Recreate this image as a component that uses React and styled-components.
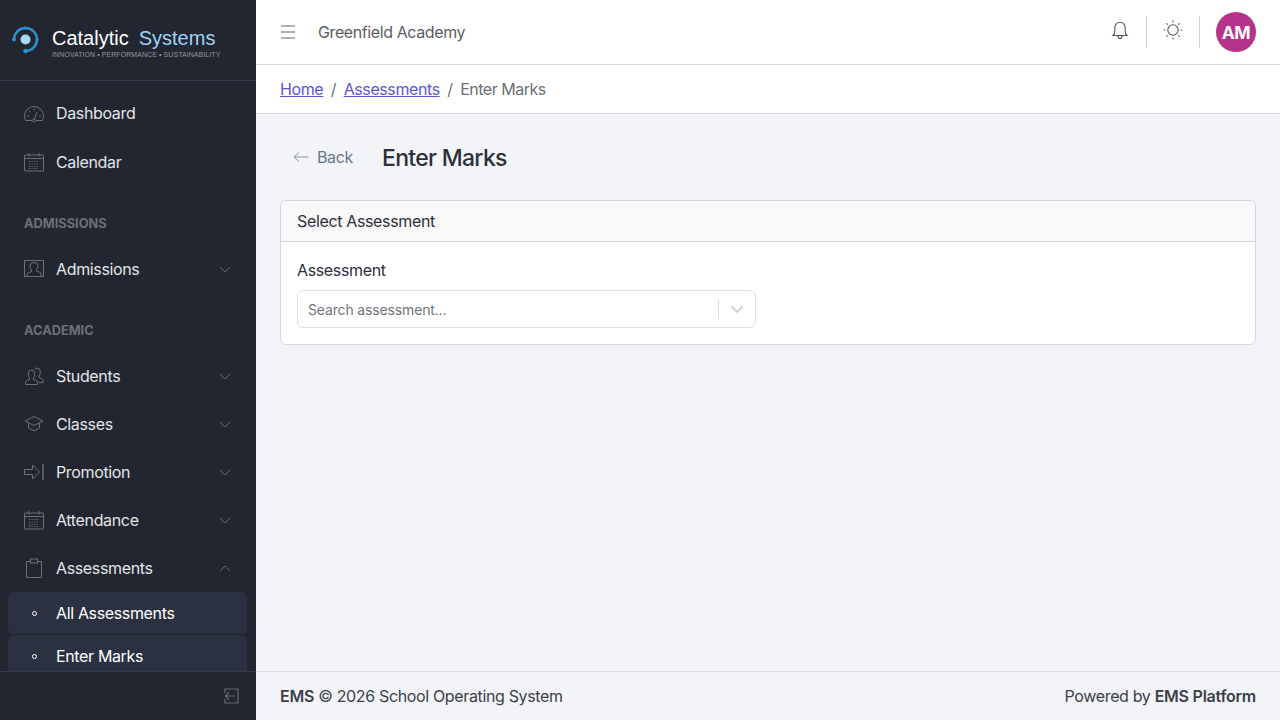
import styled, { createGlobalStyle } from "styled-components";

const Global = createGlobalStyle`
  * { box-sizing: border-box; }
  html, body { margin: 0; height: 100%; }
  body {
    font-family: Inter, "Noto Sans", sans-serif;
    font-size: 16px;
    letter-spacing: -0.022em;
    color: #252b36;
    background: #f3f4f7;
  }
`;

const Layout = styled.div`
  display: flex;
  width: 100%;
  height: 100vh;
  overflow: hidden;
`;

const Sidebar = styled.aside`
  display: flex;
  flex-direction: column;
  flex: 0 0 256px;
  height: 100%;
  background: #212631;
`;

const Brand = styled.div`
  display: flex;
  align-items: center;
  flex: 0 0 81px;
  gap: 10px;
  padding: 0 0 2px 11px;
  border-bottom: 1px solid #323a49;
`;

const BrandText = styled.div`
  display: flex;
  flex-direction: column;
  margin-top: 7px;
`;

const BrandName = styled.div`
  font-family: "Liberation Sans", Arial, sans-serif;
  font-size: 20px;
  line-height: 22px;
  letter-spacing: 0;
  color: #fff;
  white-space: nowrap;
  span {
    color: #9fd3f5;
    margin-left: 10px;
  }
`;

const Tagline = styled.div`
  margin-top: 1px;
  font-family: "Liberation Sans", Arial, sans-serif;
  font-size: 7px;
  line-height: 9px;
  letter-spacing: 0.07px;
  color: #93979d;
  white-space: nowrap;
`;

const Nav = styled.nav`
  flex: 1;
  min-height: 0;
  overflow: hidden;
  padding: 8px 0 0;
  & > :first-child {
    margin-bottom: 1px;
  }
`;

const NavItem = styled.div`
  display: flex;
  align-items: center;
  height: ${(p) => (p.$sub ? "42px" : "48px")};
  margin: ${(p) => (p.$sub ? "0 9px 1px 8px" : "0")};
  padding: ${(p) => (p.$sub ? "0 0 0 16px" : "0 25px 0 24px")};
  border-radius: 6px;
  background: ${(p) => (p.$sub ? "#2b3140" : "transparent")};
  color: ${(p) => (p.$sub ? "#fff" : "#e4e5e7")};
`;

const NavIcon = styled.svg`
  flex: 0 0 20px;
  width: 20px;
  height: 20px;
  margin-right: 12px;
  fill: none;
  stroke: #6b7079;
  stroke-width: 1;
`;

const Bullet = styled.span`
  flex: 0 0 5px;
  width: 5px;
  height: 5px;
  margin: 0 19px 0 8px;
  border: 1px solid #fff;
  border-radius: 50%;
`;

const NavLabel = styled.span`
  flex: 1;
  white-space: nowrap;
`;

const Chevron = styled.svg`
  width: 12px;
  height: 7px;
  fill: none;
  stroke: #666a72;
  stroke-width: 1;
  transform: ${(p) => (p.$up ? "rotate(180deg)" : "none")};
`;

const SectionTitle = styled.div`
  height: 59px;
  padding: 28px 24px 0;
  font-size: 12.8px;
  line-height: 19px;
  font-weight: 700;
  letter-spacing: 0;
  color: #6c7077;
  text-transform: uppercase;
`;

const SidebarFoot = styled.div`
  display: flex;
  align-items: center;
  justify-content: flex-end;
  flex: 0 0 49px;
  padding-right: 17px;
  border-top: 1px solid #323a49;
  background: #212631;
`;

const FootIcon = styled.svg`
  width: 16px;
  height: 16px;
  fill: none;
  stroke: #666a72;
  stroke-width: 1.2;
`;

const Main = styled.div`
  display: flex;
  flex-direction: column;
  flex: 1;
  min-width: 0;
`;

const Topbar = styled.header`
  display: flex;
  align-items: center;
  flex: 0 0 65px;
  padding: 0 24px 0 25px;
  background: #fff;
  border-bottom: 1px solid #d8dbe3;
`;

const Burger = styled.svg`
  width: 14px;
  height: 14px;
  margin-right: 23px;
  stroke: #5e6066;
  stroke-width: 1;
`;

const School = styled.div`
  flex: 1;
  letter-spacing: -0.025em;
  color: #5b5e64;
`;

const TopIcon = styled.svg`
  width: 20px;
  height: 20px;
  margin-bottom: 4px;
  fill: none;
  stroke: #55585e;
  stroke-width: 1.1;
`;

const Divider = styled.span`
  width: 1px;
  height: 32px;
  margin: 0 16px;
  background: #d3d5d8;
`;

const Avatar = styled.div`
  display: flex;
  align-items: center;
  justify-content: center;
  width: 40px;
  height: 40px;
  border-radius: 50%;
  background: #b5338a;
  color: #fff;
  font-size: 17.5px;
  font-weight: 700;
`;

const Breadcrumb = styled.div`
  display: flex;
  align-items: center;
  flex: 0 0 49px;
  padding: 0 24px;
  background: #fff;
  border-bottom: 1px solid #d8dbe3;
  color: #6b6f76;
`;

const Crumb = styled.a`
  color: #5856d6;
  letter-spacing: -0.025em;
  text-decoration: underline;
`;

const Slash = styled.span`
  padding: 0 7.5px;
  color: #6b6f76;
`;

const CurrentCrumb = styled.span`
  letter-spacing: -0.03em;
`;

const Content = styled.main`
  flex: 1;
  min-height: 0;
  padding: 24px;
  background: #f3f4f7;
`;

const PageHead = styled.div`
  display: flex;
  align-items: center;
  height: 40px;
  margin-bottom: 22px;
`;

const BackLink = styled.div`
  display: flex;
  align-items: center;
  gap: 8px;
  margin: 0 29px 2px 13px;
  color: #67768a;
`;

const BackArrow = styled.svg`
  width: 16px;
  height: 16px;
  fill: none;
  stroke: #8b97a6;
  stroke-width: 1;
`;

const PageTitle = styled.h1`
  margin: 0;
  font-size: 23px;
  line-height: 30px;
  font-weight: 500;
  letter-spacing: -0.03em;
  color: #2b303b;
`;

const Card = styled.section`
  background: #fff;
  border: 1px solid #d3d6dc;
  border-radius: 6px;
  overflow: hidden;
`;

const CardHead = styled.div`
  height: 41px;
  padding: 0 16px;
  line-height: 40px;
  background: #f8f8f8;
  border-bottom: 1px solid #d3d6dc;
  color: #2b303b;
`;

const CardBody = styled.div`
  padding: 16px;
`;

const FieldLabel = styled.label`
  display: block;
  margin-bottom: 8px;
  line-height: 24px;
  color: #2b303b;
`;

const Select = styled.div`
  display: flex;
  align-items: center;
  width: 459px;
  height: 38px;
  padding: 0 10px;
  background: #fff;
  border: 1px solid #dbdfe6;
  border-radius: 6px;
`;

const Placeholder = styled.span`
  flex: 1;
  font-size: 14px;
  letter-spacing: -0.15px;
  color: #6f747c;
`;

const SelectSep = styled.span`
  width: 1px;
  height: 20px;
  margin-right: 11px;
  background: #d8dbe0;
`;

const SelectArrow = styled.svg`
  width: 14px;
  height: 14px;
  margin-right: 1px;
  fill: none;
  stroke: #cfd2d6;
  stroke-width: 2;
`;

const Footer = styled.footer`
  display: flex;
  align-items: center;
  justify-content: space-between;
  flex: 0 0 49px;
  padding: 0 24px;
  background: #f3f4f7;
  border-top: 1px solid #d8dbe3;
  color: #3a3f49;
  b {
    font-weight: 600;
    letter-spacing: -0.015em;
  }
`;

const CalendarPaths = (
  <>
    <rect x="0.5" y="3" width="19" height="16" rx="0.5" />
    <path d="M0.5 6.5h19M5 1v3.5M15 1v3.5" />
    <path d="M5 9.500h10M5 12h10M5 14.500h10M5 16.500h10" strokeDasharray="1.200 1.300" />
  </>
);

const icons = {
  dashboard: (
    <>
      <path d="M8.500 17.500H1.500Q0.500 15 0.500 13A9.500 9.500 0 0 1 19.500 13Q19.500 15 18.500 17.500H11.500" />
      <circle cx="10" cy="17.500" r="1.500" />
      <path d="M10.500 16L13 9M3 13h2M15 13h2M5 8l1.500 1.200M10 5.500v2" />
    </>
  ),
  calendar: CalendarPaths,
  admissions: (
    <>
      <rect x="0.500" y="1.500" width="19" height="16" />
      <path d="M3 17.500v-2q0-1.500 2-2l2.500-1v-1.500Q6 9.500 6 7q0-3.500 4-3.500T14 7q0 2.500-1.500 3.500V12l2.500 1q2 .5 2 2v2.500" />
    </>
  ),
  students: (
    <>
      <path d="M1.500 18.500v-2q0-1.500 1.500-2l2.500-1V12Q4.200 11 4.200 8q0-4 3.300-4t3.300 4q0 3-1.300 4v1.500l2.500 1q1.500.5 1.500 2v2Z" />
      <path d="M10.500 3.500Q11.500 2 13 2q3.300 0 3.300 4 0 3-1.300 4v1.500l2.500 1q1.500.5 1.500 2v2h-4.500" />
    </>
  ),
  classes: (
    <>
      <path d="M10 2.500L1 7l9 4.500L19 7Z" />
      <path d="M4.500 9v5l5.500 3 5.500-3V9" />
    </>
  ),
  promotion: (
    <>
      <path d="M0.500 7.500h8V3l7 7-7 7v-4.500h-8Z" />
      <path d="M19 2v16" strokeWidth="1.400" />
    </>
  ),
  assessments: (
    <>
      <path d="M6.500 3.500h-4v16h15v-16h-4" />
      <rect x="6.500" y="1" width="7" height="4" />
    </>
  ),
};

const Icon = ({ name }) => (
  <NavIcon viewBox="0 0 20 20">{icons[name]}</NavIcon>
);

const Down = ({ up }) => (
  <Chevron viewBox="0 0 12 7" $up={up}>
    <path d="M1 1l5 5 5-5" />
  </Chevron>
);

const Item = ({ icon, label, arrow, up }) => (
  <NavItem>
    <Icon name={icon} />
    <NavLabel>{label}</NavLabel>
    {arrow && <Down up={up} />}
  </NavItem>
);

const SubItem = ({ label }) => (
  <NavItem $sub>
    <Bullet />
    <NavLabel>{label}</NavLabel>
  </NavItem>
);

const Logo = () => (
  <svg width="31" height="31" viewBox="0 0 31 31" fill="none">
    <path
      d="M3 15.500A11.500 11.500 0 0 1 26 15.500A11.500 11.500 0 0 1 14.500 27"
      stroke="#2f8fd0"
      strokeWidth="2.400"
    />
    <circle cx="3" cy="15.500" r="2" fill="#2f8fd0" />
    <circle cx="14.500" cy="4" r="1.600" fill="#2f8fd0" />
    <circle cx="26" cy="15.500" r="1.600" fill="#2f8fd0" />
    <circle cx="14.500" cy="27" r="2.200" fill="#2f8fd0" />
    <circle cx="14.500" cy="15.500" r="5" fill="#a9d8f7" />
  </svg>
);

const App = () => (
  <>
    <Global />
    <Layout>
      <Sidebar>
        <Brand>
          <Logo />
          <BrandText>
            <BrandName>
              Catalytic<span>Systems</span>
            </BrandName>
            <Tagline>INNOVATION • PERFORMANCE • SUSTAINABILITY</Tagline>
          </BrandText>
        </Brand>
        <Nav>
          <Item icon="dashboard" label="Dashboard" />
          <Item icon="calendar" label="Calendar" />
          <SectionTitle>Admissions</SectionTitle>
          <Item icon="admissions" label="Admissions" arrow />
          <SectionTitle>Academic</SectionTitle>
          <Item icon="students" label="Students" arrow />
          <Item icon="classes" label="Classes" arrow />
          <Item icon="promotion" label="Promotion" arrow />
          <Item icon="calendar" label="Attendance" arrow />
          <Item icon="assessments" label="Assessments" arrow up />
          <SubItem label="All Assessments" />
          <SubItem label="Enter Marks" />
        </Nav>
        <SidebarFoot>
          <FootIcon viewBox="0 0 16 16">
            <path d="M2 5V1h13v14H2v-4" />
            <path d="M12 8H2.500M6 4.500L2.500 8 6 11.500" />
          </FootIcon>
        </SidebarFoot>
      </Sidebar>
      <Main>
        <Topbar>
          <Burger viewBox="0 0 14 14">
            <path d="M0 1h14M0 7h14M0 13h14" />
          </Burger>
          <School>Greenfield Academy</School>
          <TopIcon viewBox="0 0 20 20">
            <path d="M3 15.500q1.800-1.500 1.800-4.500V7.500a5.200 5.200 0 0 1 10.400 0V11q0 3 1.800 4.500Z" />
            <path d="M8 15.500v1a2 2 0 0 0 4 0v-1" />
          </TopIcon>
          <Divider />
          <TopIcon viewBox="0 0 20 20">
            <circle cx="10" cy="10" r="5.200" />
            <path d="M10 0.500v2M10 17.500v2M0.500 10h2M17.500 10h2M3.300 3.300l1.400 1.400M15.300 15.300l1.400 1.400M3.300 16.700l1.400-1.400M15.300 4.700l1.400-1.400" />
          </TopIcon>
          <Divider />
          <Avatar>AM</Avatar>
        </Topbar>
        <Breadcrumb>
          <Crumb>Home</Crumb>
          <Slash>/</Slash>
          <Crumb>Assessments</Crumb>
          <Slash>/</Slash>
          <CurrentCrumb>Enter Marks</CurrentCrumb>
        </Breadcrumb>
        <Content>
          <PageHead>
            <BackLink>
              <BackArrow viewBox="0 0 16 16">
                <path d="M15.500 8H1M6 3.500L1 8l5 4.500" />
              </BackArrow>
              Back
            </BackLink>
            <PageTitle>Enter Marks</PageTitle>
          </PageHead>
          <Card>
            <CardHead>Select Assessment</CardHead>
            <CardBody>
              <FieldLabel>Assessment</FieldLabel>
              <Select>
                <Placeholder>Search assessment...</Placeholder>
                <SelectSep />
                <SelectArrow viewBox="0 0 14 14">
                  <path d="M1.500 4.500L7 10l5.500-5.500" />
                </SelectArrow>
              </Select>
            </CardBody>
          </Card>
        </Content>
        <Footer>
          <span>
            <b>EMS</b> © 2026 School Operating System
          </span>
          <span>
            Powered by <b>EMS Platform</b>
          </span>
        </Footer>
      </Main>
    </Layout>
  </>
);

export default App;
